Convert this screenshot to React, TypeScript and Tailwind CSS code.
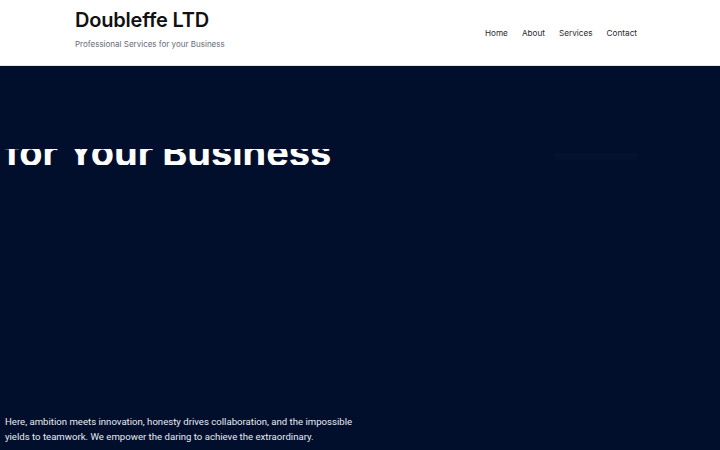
const navLinks = ['Home', 'About', 'Services', 'Contact']

export default function App() {
  return (
    <div className="h-[450px] w-[720px] overflow-hidden bg-[#010f2d] font-['Inter',sans-serif]">
      <header className="flex h-[66px] items-start justify-between border-b border-[#e3e6ee] bg-white pl-[75px] pr-[83px]">
        <div className="flex flex-col pt-[10px]">
          <h1 className="text-[20px] font-semibold leading-[20px] tracking-[-0.2px] text-[#111]">
            Doubleffe LTD
          </h1>
          <p className="mt-[9px] text-[8px] leading-[10px] text-[#666b75]">
            Professional Services for your Business
          </p>
        </div>
        <nav className="flex items-center gap-[14px] pt-[28px] text-[8.2px] leading-[10px] text-[#2b2b2b]">
          {navLinks.map((l) => (
            <a key={l} className="cursor-pointer">
              {l}
            </a>
          ))}
        </nav>
      </header>

      <section className="flex h-[384px] flex-col">
        <div className="flex items-start justify-between pt-[83px] pr-[83px]">
          {/* heading is mid-reveal, top clipped */}
          <div className="h-[16px] overflow-hidden pl-[5px]">
            <h2 className="-mt-[16px] whitespace-nowrap text-[38px] font-bold leading-[38px] text-white">
              for Your Business
            </h2>
          </div>
          <div className="mt-[4px] h-[7px] w-[82px] bg-white/[0.015]" />
        </div>
        <p className="mt-auto w-[360px] pb-[6px] pl-[5px] font-['Roboto',sans-serif] text-[9.6px] leading-[15px] text-[#e8ebf2]">
          Here, ambition meets innovation, honesty drives collaboration, and the impossible yields to
          teamwork. We empower the daring to achieve the extraordinary.
        </p>
      </section>
    </div>
  )
}
